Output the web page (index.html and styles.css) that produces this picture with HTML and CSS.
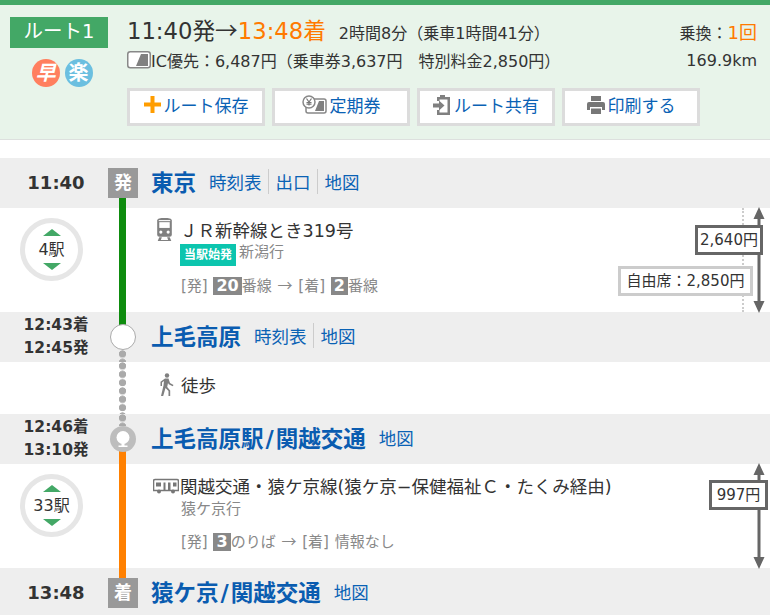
FILE: index.html
```html
<!DOCTYPE html>
<html lang="ja">
<head>
<meta charset="utf-8">
<title>ルート1</title>
<link rel="stylesheet" href="styles.css">
</head>
<body>
<header class="summary">
  <div class="summary-left">
    <div class="route-badge">ルート1</div>
    <div class="marks"><span class="mark mark-fast">早</span><span class="mark mark-easy">楽</span></div>
  </div>
  <div class="summary-main">
    <div class="summary-line1">
      <span class="times">11:40発<span class="cjk">→</span><span class="orange">13:48着</span></span>
      <span class="dur">2時間8分（乗車1時間41分）</span>
      <span class="transfer">乗換：<span class="orange big">1回</span></span>
    </div>
    <div class="summary-line2">
      <svg class="ic" width="24" height="18" viewBox="0 0 24 18"><rect x="0.75" y="0.75" width="22.5" height="16" rx="2.5" fill="#fff" stroke="#888" stroke-width="1.5"/><path d="M9 15 L14 3 H21 V15 Z" fill="#808080"/></svg>
      <span class="fare">IC優先：6,487円（乗車券3,637円　特別料金2,850円）</span>
      <span class="dist">169.9km</span>
    </div>
    <div class="buttons">
      <a class="btn"><svg width="17" height="17" viewBox="0 0 17 17"><path d="M6.5 0h4v6.5H17v4h-6.5V17h-4v-6.5H0v-4h6.5z" fill="#ff9d00"/></svg>ルート保存</a>
      <a class="btn"><svg width="25" height="19" viewBox="0 0 25 19"><rect x="4" y="4" width="20" height="14" rx="2" fill="#fff" stroke="#888" stroke-width="1.5"/><path d="M13 16 L17 6 H22 V16 Z" fill="#808080"/><circle cx="7" cy="7" r="6" fill="#fff" stroke="#888" stroke-width="1.5"/><path d="M4.5 3.5 7 7l2.500-3.500M7 7v3.500M4.500 7.500h5M4.500 9.200h5" fill="none" stroke="#777" stroke-width="1.200"/></svg>定期券</a>
      <a class="btn"><svg width="18" height="20" viewBox="0 0 18 20"><path d="M4 6V2h3V0h5v2h5v18H4v-5h2.500v2.500h8v-13H6.500V6z" fill="#808080"/><path d="M0 8.500h6V5.500l5.500 5-5.500 5v-3H0z" fill="#808080"/></svg>ルート共有</a>
      <a class="btn"><svg width="18" height="18" viewBox="0 0 18 18"><path d="M4 0h10v5H4zM2 6h14a2 2 0 0 1 2 2v6h-3v-3H3v3H0V8a2 2 0 0 1 2-2zM4 12.500h10V18H4z" fill="#777"/></svg>印刷する</a>
    </div>
  </div>
</header>

<main class="route">
  <section class="station">
    <div class="st-time single">11:40</div>
    <div class="st-node"><span class="flag">発</span><i class="rail rail-down green"></i></div>
    <div class="st-name">東京</div>
    <div class="st-links"><a>時刻表</a><a>出口</a><a>地図</a></div>
  </section>

  <section class="segment">
    <div class="seg-left"><div class="stops"><i class="tri up"></i><span>4駅</span><i class="tri down"></i></div></div>
    <div class="seg-rail"><i class="rail full green"></i></div>
    <div class="seg-body">
      <div class="line-title">
        <svg class="train" width="19" height="23" viewBox="2 1 16 22"><path d="M3 3.500C3 1.500 6 1 10 1s7 .5 7 2.500V17a2 2 0 0 1-2 2H5a2 2 0 0 1-2-2z" fill="#808080"/><rect x="5" y="5" width="10" height="5.500" fill="#fff"/><rect x="4.500" y="3" width="11" height="1" fill="#fff"/><circle cx="6.500" cy="14.500" r="1.500" fill="#fff"/><circle cx="13.500" cy="14.500" r="1.500" fill="#fff"/><path d="M5 19.500h2.500L6.500 22h7l-1-2.500H15l1.500 3.500h-13z" fill="#808080"/></svg>
        <span class="line-name">ＪＲ新幹線とき319号</span>
      </div>
      <div class="line-sub"><span class="tag">当駅始発</span><span class="dest">新潟行</span></div>
      <div class="platform">[発] <b class="num">20</b>番線 <span class="cjk">→</span> [着] <b class="num">2</b>番線</div>
    </div>
    <div class="fare-col">
      <i class="dotted"></i>
      <svg class="arrow" width="14" height="106" viewBox="0 0 14 106"><path d="M7 0l5.500 12H8.500v82h4L7 106 1.500 94h4V12h-4z" fill="#666"/></svg>
      <div class="price price-one">2,640円</div>
      <div class="price price-free">自由席：2,850円</div>
    </div>
  </section>

  <section class="station">
    <div class="st-time">12:43着<br>12:45発</div>
    <div class="st-node"><i class="rail rail-up green"></i><span class="dot-open"></span><i class="walk-dots walk-down"></i></div>
    <div class="st-name">上毛高原</div>
    <div class="st-links"><a>時刻表</a><a>地図</a></div>
  </section>

  <section class="walk">
    <div class="seg-left"></div>
    <div class="seg-rail"><i class="walk-dots walk-full"></i></div>
    <div class="walk-body">
      <svg width="17" height="23" viewBox="0 0 17 23"><circle cx="9" cy="2.500" r="2.200" fill="#808080"/><path d="M7 5.500h3.500l1.500 4.500 3.500 2-.8 1.300-4-2-.7-1.300-.8 4 3 3.500V23h-1.700v-5l-3-3-2.300 8H3l2.500-10.500L6 8 4 9.500V13H2.500V8.800z" fill="#808080"/></svg>
      <span>徒歩</span>
    </div>
  </section>

  <section class="station">
    <div class="st-time">12:46着<br>13:10発</div>
    <div class="st-node"><i class="walk-dots walk-up"></i>
      <svg class="dot-pin" width="26" height="26" viewBox="0 0 26 26"><circle cx="13" cy="13" r="13" fill="#bdbdbd"/><circle cx="13" cy="11.500" r="6.500" fill="#fff"/><path d="M11.500 16h3v3.500h3V21h-9v-1.500h3z" fill="#fff"/></svg>
      <i class="rail rail-down orange-bg"></i></div>
    <div class="st-name">上毛高原駅<span class="slash">/</span>関越交通</div>
    <div class="st-links"><a>地図</a></div>
  </section>

  <section class="segment">
    <div class="seg-left"><div class="stops"><i class="tri up"></i><span>33駅</span><i class="tri down"></i></div></div>
    <div class="seg-rail"><i class="rail full orange-bg"></i></div>
    <div class="seg-body">
      <div class="line-title">
        <svg class="bus" width="26" height="16" viewBox="0 0 26 16"><path d="M2 1.500h22a1.500 1.500 0 0 1 1.500 1.500v9.500H.5V3A1.500 1.500 0 0 1 2 1.500z" fill="#fff" stroke="#777" stroke-width="1.600"/><path d="M3 4.500h5v4H3zM10.500 4.500h2v8h-2zM15 4.500h2.500v8H15zM20 4.500h3.500v4H20z" fill="#777"/><circle cx="6" cy="13.500" r="2" fill="#777"/><circle cx="20" cy="13.500" r="2" fill="#777"/></svg>
        <span class="line-name">関越交通・猿ケ京線(猿ケ京−保健福祉Ｃ・たくみ経由)</span>
      </div>
      <div class="line-sub"><span class="dest dest-plain">猿ケ京行</span></div>
      <div class="platform">[発] <b class="num">3</b>のりば <span class="cjk">→</span> [着] 情報なし</div>
    </div>
    <div class="fare-col">
      <svg class="arrow" width="14" height="106" viewBox="0 0 14 106"><path d="M7 0l5.500 12H8.500v82h4L7 106 1.500 94h4V12h-4z" fill="#666"/></svg>
      <div class="price price-bus">997円</div>
    </div>
  </section>

  <section class="station">
    <div class="st-time single">13:48</div>
    <div class="st-node"><i class="rail rail-up orange-bg"></i><span class="flag">着</span></div>
    <div class="st-name">猿ケ京<span class="slash">/</span>関越交通</div>
    <div class="st-links"><a>地図</a></div>
  </section>
</main>
</body>
</html>
```

FILE: styles.css
```css
* { box-sizing: border-box; }
html, body { margin: 0; padding: 0; }
body {
  width: 770px;
  height: 615px;
  overflow: hidden;
  background: #fff;
  color: #333;
  font-family: "DejaVu Sans", "Noto Sans CJK JP", sans-serif;
  font-size: 15px;
}
a { color: #0a62b5; text-decoration: none; }
i { display: block; }
.cjk { font-family: "Noto Sans CJK JP", sans-serif; }

.summary {
  display: flex;
  height: 140px;
  border-top: 5px solid #43a866;
  border-bottom: 1px solid #dde0de;
  background: #e8f4ea;
  padding: 12px 13px 0 10px;
}
.summary-left { width: 98px; margin-right: 19px; flex: none; }
.route-badge {
  height: 31px;
  background: #43a866;
  color: #fff;
  font-size: 19.500px;
  line-height: 30px;
  text-align: center;
}
.marks { display: flex; justify-content: center; gap: 5px; margin-top: 11px; padding-left: 6px; }
.mark {
  width: 28px; height: 28px; border-radius: 50%;
  color: #fff; font-weight: 700; font-size: 20px; line-height: 28px; text-align: center;
}
.mark-fast { background: #ff7f5f; font-style: italic; }
.mark-easy { background: #6bbfe0; }

.summary-main { flex: 1; }
.summary-line1 { display: flex; align-items: baseline; height: 25px; line-height: 25px; }
.times { font-size: 22.700px; }
.orange { color: #ff7a00; }
.dur { margin-left: 13px; font-size: 16px; }
.transfer { margin-left: auto; font-size: 16px; }
.big { font-size: 18px; }
.summary-line2 { display: flex; align-items: center; height: 24px; margin-top: 6px; font-size: 16px; }
.dist { margin-left: auto; }
.buttons { display: flex; gap: 7px; margin-top: 16px; }
.btn {
  width: 138px; height: 38px;
  display: flex; align-items: center; justify-content: center; gap: 3px;
  padding-bottom: 5px;
  background: #fff; border: 3px solid #dcdcdc;
  font-size: 17px;
}

.route { margin-top: 18px; }
.station {
  display: flex;
  align-items: center;
  height: 50px;
  background: #eee;
}
.st-time {
  width: 108px; flex: none; padding-left: 4px;
  text-align: center;
  font-weight: 700; font-size: 15.500px; line-height: 23px;
}
.st-time.single { font-size: 18px; padding-bottom: 2px; }
.st-node {
  position: relative;
  width: 30px; height: 50px; flex: none;
  display: flex; align-items: center; justify-content: center;
}
.flag {
  position: relative;
  z-index: 2;
  width: 30px; height: 30px;
  background: #999; color: #fff;
  font-weight: 700; font-size: 18px; line-height: 30px; text-align: center;
}
.st-name {
  margin-left: 13px; padding-bottom: 4px;
  color: #0a5cb0; font-weight: 700; font-size: 22.500px;
}
.slash { margin: 0 2px; }
.st-links { display: flex; margin-left: 13px; padding-bottom: 4px; font-size: 17.500px; }
.st-links a + a { margin-left: 6px; padding-left: 7px; border-left: 1px solid #ccc; }

.rail { position: absolute; left: 11px; width: 7px; }
.green { background: #0e8c0e; }
.orange-bg { background: #ff8000; }
.rail-up { top: 0; height: 14px; }
.rail-down { bottom: 0; height: 14px; }
.rail.full { top: 0; bottom: 0; }
.dot-open {
  position: relative; z-index: 2;
  width: 26px; height: 26px; border-radius: 50%;
  background: #fff; border: 1.500px solid #aaa;
}
.dot-pin { position: relative; z-index: 2; }
.walk-dots {
  position: absolute; left: 11px; width: 7px;
  background: radial-gradient(circle at 3.500px 4px, #aaa 3.400px, transparent 3.900px) 0 0 / 7px 8.330px repeat-y;
}
.walk-down { bottom: 0; height: 12px; }
.walk-up { top: 0; height: 12px; }
.walk-full { top: 0; bottom: 0; }

.segment { position: relative; display: flex; height: 104px; }
.walk { display: flex; height: 52px; }
.walk-body { display: flex; align-items: center; gap: 6px; padding: 0 0 8px 20px; font-size: 17.500px; }
.seg-left { width: 108px; flex: none; padding: 10px 0 0 20px; }
.seg-rail { position: relative; width: 30px; flex: none; }
.stops {
  width: 63px; height: 63px;
  border: 5px solid #e6e6e6; border-radius: 50%;
  display: flex; flex-direction: column; align-items: center; justify-content: center;
  font-size: 16px; line-height: 27px;
}
.tri { width: 0; height: 0; border-left: 9px solid transparent; border-right: 9px solid transparent; }
.tri.up { border-bottom: 7px solid #43a866; }
.tri.down { border-top: 7px solid #43a866; }

.seg-body { flex: 1; padding: 9px 0 0 15px; }
.line-title { display: flex; align-items: center; height: 24px; font-size: 17.500px; }
.train { margin: 1px 6px 0 2px; }
.bus { margin: 1px 1px 0 0; }
.line-sub { display: flex; align-items: center; height: 22px; margin-top: 3px; padding-left: 27px; }
.tag {
  width: 56px; height: 22px;
  background: #0cc5ae; color: #fff;
  font-size: 12px; font-weight: 700; line-height: 22px; text-align: center;
}
.dest { margin: -9px 0 0 3px; font-size: 15px; color: #888; }
.dest-plain { margin: -8px 0 0 1px; }
.platform { margin-top: 8px; padding-left: 28px; font-size: 15px; line-height: 22px; word-spacing: 1px; color: #888; }
.num {
  display: inline-block;
  padding: 0 3px;
  background: #888; color: #fff;
  font-size: 16px; line-height: 18px;
}

.fare-col { position: absolute; top: 0; right: 0; bottom: 0; width: 160px; }
.dotted { position: absolute; left: 132px; top: 0; bottom: 0; border-left: 2px dotted #ccc; }
.arrow { position: absolute; right: 4px; top: -1px; }
.price {
  position: absolute;
  background: #fff;
  border: 3px solid #666;
  font-size: 15px; line-height: 24px; text-align: center;
}
.price-one { left: 85px; top: 17px; width: 68px; height: 30px; }
.price-free { left: 8px; top: 58px; width: 135px; height: 30px; border-color: #ccc; }
.price-bus { left: 99px; top: 16px; width: 59px; height: 30px; }
```
